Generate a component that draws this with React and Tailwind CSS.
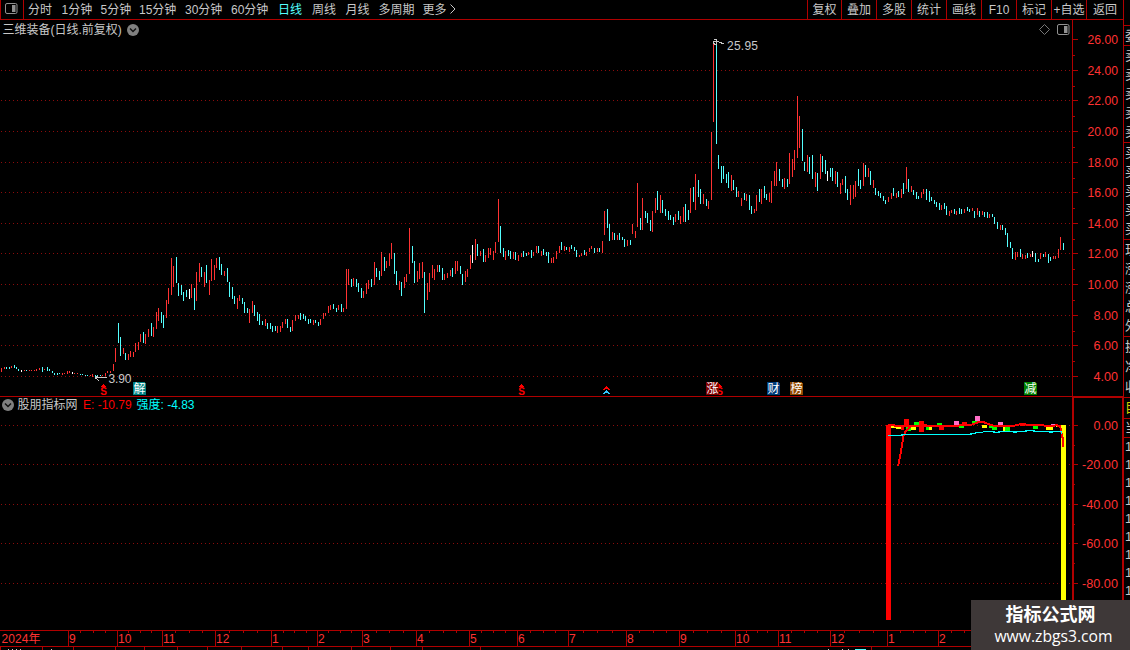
import React from "react";

const FONT = '"Liberation Sans", "Noto Sans CJK SC", sans-serif';

// Each bar is "<colour><x> <top> <bottom>" in thirds of a pixel, relative to its block's origin.
const BLOCKS = [
  {
    ox: 0, oy: 310,
    bars:
      "r4 174 186;r13 171 177;c19 171 177;c28 171 177;r34 168 174;c43 165 174;c49 171 177;c55 177 183;w64 180 186;r73 180 183;c79 180 183;r88 180 183;r94 180 183;r103 180 183;r109 177 183;r118 174 180;c127 171 186;r133 177 180;c142 171 183;c148 177 183;c157 183 189;c163 189 195;c172 189 195;c178 189 192;r187 189 195;r193 189 192;r202 183 192;r208 183 189;w217 186 192;r223 189 192;r232 189 192;c241 192 195;c247 192 195;c256 195 198;c262 195 198;r271 195 198;r277 192 201;c286 195 201;c292 195 198;c301 195 198;r307 195 198;r316 189 198;r322 183 189;r331 183 189;r340 162 183;r346 114 156;c355 39 99;c361 81 138;r370 114 132;c376 129 150;r385 132 150;r391 123 141;r400 126 141;r406 99 126;r415 96 120;r421 72 96;c430 66 99;r436 72 102;r445 57 81",
  },
  {
    ox: 0, oy: 230,
    bars:
      "c454 279 318;r460 291 321;r469 246 297;r475 234 273;c484 246 279;c490 255 294;r499 210 264;r505 174 222;r514 84 195;r520 108 171;c529 81 159;c535 159 198;c544 165 195;c550 186 213;c559 180 201;w568 177 207;r574 162 204;c583 174 240;r589 126 213;r598 99 156;c604 111 141;r613 126 171;c619 105 159;r628 150 195;r634 87 153;r643 105 150;r649 84 114;c658 81 120;c664 102 135;r673 123 138;c682 114 156;c688 156 201;c697 171 207;c703 198 222;r712 204 237;r718 195 213;c727 204 222;c733 216 249;c742 234 249;r748 237 279;r757 213 249;c763 225 258;c772 246 273;c778 252 285;c787 273 285;r796 267 288;c802 279 297;c811 279 297;c817 288 306;c826 288 303;r832 288 309;r841 288 306;r847 276 294;r856 267 282;c862 267 294;c871 291 306;r877 270 303;r886 255 273;r895 255 267;c901 249 270;c910 252 267;c916 258 273;c925 267 282;c931 267 279;r940 270 285;c946 270 279;c955 276 288;r961 267 285;r970 249 267;r976 249 258;r985 228 249;r991 225 240;c1000 222 237;c1009 234 246;r1015 225 240",
  },
  {
    ox: 340, oy: 180,
    bars:
      "c4 372 396;r10 384 396;r19 267 387;r25 267 315;c34 297 321;r40 294 318;c49 297 321;c55 309 336;c64 324 354;r70 333 354;r79 309 342;r85 300 327;c94 297 321;r103 246 315;c109 264 291;c118 273 300;r124 216 288;c133 231 273;r139 243 264;r148 219 258;r154 189 237;c163 219 282;c169 273 315;r178 303 330;c184 306 348;r193 291 324;r199 282 306;r208 144 282;c217 198 249;c223 243 309;r232 273 306;r238 249 297;r247 246 294;c253 276 399;r262 309 360;r268 279 336;r277 255 294;r283 267 300;r292 255 276;c298 255 276;c307 264 300;r313 282 300;r322 279 294;r331 270 288;c337 264 291;r346 243 282;r352 243 273;c361 258 282;c367 282 315;r376 273 306;r382 267 291;r391 225 267;w397 195 249;r406 177 240;c412 192 228;r421 213 228;c430 207 246;r436 225 246;r445 204 234;r451 204 225;r460 213 240;r466 186 219;r475 57 186;c481 138 219;c490 204 231;r496 213 240;c505 210 228;c511 213 237;r520 216 237;c526 216 240;r535 225 243;r544 219 231;c550 213 231;c559 219 228;r565 216 225;c574 210 234;r580 216 228;r589 198 219;c595 198 219;r604 213 228;c610 207 225;c619 216 228;c625 216 249;r634 234 249;r640 231 249;r649 213 237;r658 198 219;c664 186 210;r673 198 213;c679 201 210;r688 201 216;c694 195 207;c703 201 213;c709 210 231;r718 225 231;r724 219 228;c733 210 225;r739 216 228;r748 204 216;r754 198 207;c763 204 219;r772 204 216;c778 204 216;r787 183 219;r793 93 165;c802 87 144;c808 132 183;r817 156 180;c823 159 180;r832 165 180;c838 159 180;c847 171 180;c853 177 201;r862 180 198;c871 180 195;r877 132 162;r886 153 174;r892 9 141",
  },
  {
    ox: 640, oy: 30,
    bars:
      "c1 564 600;r7 504 600;c16 543 564;c22 549 579;c31 570 603;r37 543 606;r46 504 549;c52 483 540;r61 495 549;c67 510 549;c76 537 558;c85 543 570;c91 555 570;c100 561 585;r106 552 576;c115 543 570;r121 558 582;r130 531 576;c136 522 576;c145 540 570;r151 474 549;c160 471 516;r166 432 540;c175 450 501;c181 477 522;r190 492 522;c199 507 528;r205 513 537;r214 306 510;r220 36 276;c229 27 342;c235 375 417;c244 408 459;c250 408 447;c259 432 459;c265 426 474;r274 435 483;c280 450 480;c289 471 501;r295 483 501;r304 504 528;c313 489 510;r319 492 513;c328 495 540;c334 528 552;r343 537 549;r349 495 543;c358 477 516;r364 477 522;c373 468 504;c379 492 510;r388 489 516;r394 453 519;r403 423 468;r409 396 468;c418 417 453;c427 447 471;r433 444 477;c442 447 471;r448 369 462;r457 387 441;r463 360 420;r472 198 384;r478 258 354;c487 297 393;c493 396 423;r502 375 426;c508 381 432;c517 375 447;r526 426 471;c532 429 483;r541 372 447;c547 378 426;c556 390 432;w562 423 453;c571 414 441;c577 414 453;r586 423 462;c592 426 471",
  },
  {
    ox: 840, oy: 140,
    bars:
      "r1 129 162;r7 117 135;c16 108 159;c22 147 180;r31 135 195;r40 135 177;r46 123 171;c55 87 138;c61 120 147;r70 69 138;c76 75 111;r85 84 111;c91 93 135;r100 120 144;c106 144 165;c115 153 168;c121 159 174;c130 168 183;c136 180 192;r145 171 186;r154 159 177;c160 144 168;r169 159 174;c175 153 171;r184 147 174;c190 129 162;r199 81 147;c205 117 156;r214 138 156;c220 150 165;c229 156 177;c235 168 177;r244 156 174;r250 147 162;c259 147 180;c268 153 186;c274 171 183;c283 180 192;c289 186 201;c298 189 210;r304 195 210;c313 189 207;c319 198 225;r328 213 228;r334 210 219;c343 207 222;r349 213 225;c358 204 222;c364 207 222;r373 207 219;c382 201 213;c388 207 216;r397 204 213;c403 213 234;r412 204 225;c418 213 231;r427 213 225;c433 216 231;c442 216 234;r448 222 234;c457 222 231;c463 231 252;c472 246 267;r481 255 270;c487 255 270;c496 264 285;c502 279 321;c511 306 324;c517 324 357;r526 336 360;r532 336 351;c541 327 351;r547 342 357;r556 345 357;c562 339 354;r571 342 351;w577 333 351;c586 339 366;c595 357 366;r601 339 357;c610 342 351;r616 336 351;c625 342 369;c631 351 363;r640 348 357;r646 348 357;r655 327 354;r661 291 330;c670 309 330",
  },
];

const COLORS = { r: "#ff3232", c: "#54ffff", w: "#ffffff" };

const BARS = BLOCKS.flatMap(({ ox, oy, bars }) =>
  bars.split(";").map((s) => {
    const [x, a, b] = s.slice(1).split(" ").map(Number);
    return {
      color: COLORS[s[0]],
      x: ox + Math.floor(x / 3),
      y: oy + Math.round(a / 3),
      h: Math.max(1, Math.round((b - a) / 3)),
    };
  })
);

const PRICE_TICKS = [
  ["26.00", 39], ["24.00", 70], ["22.00", 100], ["20.00", 131], ["18.00", 162], ["16.00", 192],
  ["14.00", 223], ["12.00", 253], ["10.00", 284], ["8.00", 315], ["6.00", 345], ["4.00", 376],
];
const LEVEL_TICKS = [["0.00", 425], ["-20.00", 464], ["-40.00", 504], ["-60.00", 543], ["-80.00", 583]];

const MONTHS = [
  [68, "9"], [117, "10"], [162, "11"], [215, "12"], [271, "1"], [317, "2"], [362, "3"], [416, "4"], [469, "5"],
  [517, "6"], [568, "7"], [626, "8"], [679, "9"], [735, "10"], [778, "11"], [830, "12"], [887, "1"], [938, "2"],
];

const PERIODS = [
  ["分时", 28], ["1分钟", 61.5], ["5分钟", 100.5], ["15分钟", 139], ["30分钟", 185], ["60分钟", 231],
  ["日线", 278], ["周线", 312], ["月线", 345.5], ["多周期", 378.5], ["更多", 422.5],
];
const TOOLS = ["复权", "叠加", "多股", "统计", "画线", "F10", "标记", "+自选"];

function PanelIcon({ className }) {
  return (
    <svg className={className} width="13" height="11" viewBox="0 0 13 11" fill="none">
      <rect x="0.5" y="0.5" width="11.5" height="10" rx="1.5" stroke="#909090" />
      <rect x="7" y="2" width="3.5" height="7" fill="#909090" />
    </svg>
  );
}

function Chevron() {
  return (
    <svg width="12" height="12" viewBox="0 0 12 12">
      <circle cx="6" cy="6" r="6" fill="#808080" />
      <path d="M3 4.5 L6 7.5 L9 4.5" stroke="#111" strokeWidth="1.5" fill="none" />
    </svg>
  );
}

function Grid({ y }) {
  return <line x1="1" x2="1071" y1={y + 0.5} y2={y + 0.5} stroke="#8c0c0c" strokeDasharray="1 3" />;
}

function Badge({ x, text, fill }) {
  return (
    <g>
      <path d={`M${x} 382h11l2 2v11h-13z`} fill={fill} />
      <text x={x + 0.5} y="393" fontSize="12" fill="#fff">{text}</text>
    </g>
  );
}

function Dollar({ x }) {
  return (
    <g fill="#ff0000">
      <path d={`M${x} 387l3-3l3 3z`} />
      <text x={x - 0.3} y="395" fontSize="10" fontWeight="700">S</text>
      <rect x={x + 2} y="386" width="2" height="2" />
    </g>
  );
}

function AxisLabel({ text, y }) {
  const w = text.length * 6 + (text[0] === "-" ? 0 : 0.5);
  return (
    <text x={1118 - w} y={y + 5} fontSize="13" fill="#ff3232" textLength={w} lengthAdjust="spacingAndGlyphs">
      {text}
    </text>
  );
}

function PriceChart() {
  return (
    <svg className="block" width="1123" height="377" viewBox="0 20 1123 377" shapeRendering="crispEdges" fontFamily={FONT}>
      {PRICE_TICKS.slice(1).map(([t, y]) => <Grid key={t} y={y} />)}
      <rect x="1072" y="20" width="1" height="376" fill="#b00000" />
      {PRICE_TICKS.map(([t, y]) => (
        <g key={t}>
          <rect x="1073" y={y} width="5" height="1" fill="#b00000" />
          {y < 370 && <rect x="1073" y={y + 16} width="2" height="1" fill="#b00000" />}
          <AxisLabel text={t} y={y} />
        </g>
      ))}
      {BARS.map((b, i) => <rect key={i} x={b.x} y={b.y} width="1" height={b.h} fill={b.color} />)}

      <g stroke="#c8c8c8" fill="none">
        <path d="M95 377.5h12M95 377.5l4 3.5M95 377.5l3-1.5" />
        <path d="M713.500 39.500h3v5h-2l-1-2M713 41.500h5l6 2.500" />
      </g>
      <text x="108.500" y="383" fontSize="12" fill="#c8c8c8" textLength="23">3.90</text>
      <text x="727" y="50" fontSize="12" fill="#c8c8c8" textLength="31">25.95</text>
      <path d="M1044.500 24.500l5 5l-5 5l-5-5z" fill="none" stroke="#777" shapeRendering="auto" />

      <Dollar x={100.500} />
      <Badge x={133} text="解" fill="#008080" />
      <Dollar x={518.500} />
      <path d="M602.500 390l4-4l4 4h-2l-2-1.500l-2 1.500z" fill="#ff0000" />
      <path d="M602.500 394l4-4l4 4h-2l-2-1.500l-2 1.500z" fill="#30c8ff" />
      <Dollar x={716.500} />
      <Badge x={706} text="涨" fill="#800000" />
      <Badge x={767} text="财" fill="#003c78" />
      <Badge x={790} text="榜" fill="#904800" />
      <Badge x={1024} text="减" fill="#008000" />
      <rect x="0" y="396" width="1123" height="1" fill="#b00000" />
    </svg>
  );
}

// Blocks around the zero level: colour, x, y, width, height in thirds of a pixel.
const CELLS = [
  ["#ffff00", 93, 165, 18, 9], ["#ffff00", 108, 165, 15, 12], ["#ff0000", 123, 168, 9, 12],
  ["#ff0000", 132, 147, 15, 18], ["#00ff00", 138, 165, 15, 18], ["#ffff00", 153, 165, 15, 15],
  ["#00ff00", 162, 156, 15, 9], ["#ff0000", 177, 153, 15, 33], ["#ff0000", 192, 162, 9, 9],
  ["#00ff00", 198, 168, 12, 12], ["#ffff00", 207, 171, 8, 9], ["#00ff00", 213, 165, 9, 6],
  ["#00ff00", 231, 159, 15, 6], ["#ff0000", 237, 165, 15, 14], ["#ff6ec7", 282, 153, 15, 12],
  ["#ff0000", 306, 156, 15, 12], ["#00ff00", 297, 168, 15, 6], ["#ff6ec7", 345, 138, 15, 18],
  ["#00ff00", 336, 153, 15, 9], ["#ffff00", 366, 165, 15, 9], ["#00ff00", 387, 165, 12, 9],
  ["#00ff00", 396, 168, 15, 12], ["#ff6ec7", 414, 156, 15, 9], ["#ffff00", 428, 168, 8, 15],
  ["#00ff00", 435, 171, 15, 12], ["#ff0000", 480, 159, 15, 9], ["#00ff00", 519, 165, 15, 12],
  ["#ffff00", 558, 168, 21, 12], ["#ff6ec7", 573, 162, 15, 6], ["#ffff00", 588, 165, 18, 6],
];

function IndicatorChart() {
  return (
    <svg className="block" width="1123" height="233" viewBox="0 397 1123 233" shapeRendering="crispEdges" fontFamily={FONT}>
      {LEVEL_TICKS.map(([t, y]) => (
        <g key={t}>
          <Grid y={y} />
          <rect x="1074" y={y} width="4" height="1" fill="#b00000" />
          <rect x="1074" y={y + 20} width="1" height="1" fill="#b00000" />
          <AxisLabel text={t} y={y} />
        </g>
      ))}
      <path d="M1072 396h51v2h-49v232h-2z" fill="#b00000" />
      <rect x="1122" y="397" width="1" height="233" fill="#b00000" />
      <rect x="886" y="425" width="5" height="195" fill="#ff0000" />
      <rect x="1061" y="425" width="5" height="195" fill="#ffff00" />
      <g transform="translate(860 370) scale(0.33333)">
        {CELLS.map(([c, x, y, w, h], i) => <rect key={i} x={x} y={y} width={w} height={h} fill={c} />)}
        <path
          fill="none" stroke="#ff0000" strokeWidth="6"
          d="M84 167L90 165H100L106 168L160 168H270L290 167L320 165L340 163L354 157H372L384 162L400 167H440L460 168L480 163L517 164L545 166L570 168L590 166L600 168L604 185L608 205V231"
        />
        <path fill="none" stroke="#ff0000" strokeWidth="6" d="M111 286H115L118 270L124 238L130 200L136 186L146 174L156 167" />
        <path
          fill="none" stroke="#00ffff" strokeWidth="3.2"
          d="M84 196.500H126V193.500H333V190.500H347V187.500H360L378 184.500H402V187.500H417V184.500H462V187.500H468V184.500H498V181.500H522V184.500H570V187.500H576V184.500H603L606 190.500"
        />
      </g>
    </svg>
  );
}

function TimeAxis() {
  const line = "#b00000";
  return (
    <svg className="block" width="1123" height="20" viewBox="0 630 1123 20" shapeRendering="crispEdges" fontFamily={FONT}>
      <rect x="0" y="630" width="1123" height="1" fill={line} />
      <rect x="0" y="646" width="1123" height="1" fill={line} />
      <text x="1.500" y="643" fontSize="12" fill="#ff3232" textLength="39">2024年</text>
      {MONTHS.map(([x, label], i) => {
        const step = ((MONTHS[i + 1] ? MONTHS[i + 1][0] : 990) - x) / 4;
        return (
          <g key={x}>
            <rect x={x} y="630" width="1" height="17" fill={line} />
            {[1, 2, 3].map((n) => <rect key={n} x={Math.round(x + n * step)} y="631" width="1" height="2" fill={line} />)}
            <text x={x + 1} y="643" fontSize="12" fill="#ff3232">{label}</text>
          </g>
        );
      })}
      {[0, 42, 73, 115, 144, 177, 207, 241, 282, 308, 351, 390, 422, 480, 871].map((x) => (
        <rect key={x} x={x} y="647" width="1" height="3" fill={line} />
      ))}
      {[8, 12, 16, 20, 51, 828, 842, 848].map((x) => <rect key={x} x={x} y="649" width="1" height="1" fill="#c8c8c8" />)}
      <rect x="855" y="649" width="11" height="1" fill="#54ffff" />
    </svg>
  );
}

function StripGroup({ rows, className }) {
  return (
    <div className={`flex shrink-0 flex-col justify-around overflow-hidden border-t border-[#b00000] pl-px ${className}`}>
      {rows.map((r, i) => <span key={i} className="block w-4 whitespace-nowrap text-[13px] leading-[14px]">{r}</span>)}
    </div>
  );
}

function SideStrip() {
  return (
    <aside className="flex w-[7px] shrink-0 flex-col overflow-hidden border-l border-[#b00000] text-[#c8c8c8]">
      <div className="h-[5px] shrink-0" />
      <StripGroup rows={["委"]} className="h-5" />
      <StripGroup rows={["卖", "卖", "卖", "卖", "卖"]} className="h-[97px]" />
      <StripGroup rows={["买", "买", "买", "买", "买"]} className="h-[97px]" />
      <StripGroup rows={["现", "涨", "涨", "总", "外"]} className="h-[97px]" />
      <StripGroup rows={["换", "净", "收"]} className="h-[61px]" />
      <StripGroup rows={["目"]} className="h-[21px] text-[#d0d000]" />
      <StripGroup rows={["当"]} className="h-[19px]" />
      <StripGroup rows={["1", "1", "1", "1", "1", "1", "1", "1", "1"]} className="h-[163px]" />
    </aside>
  );
}

export default function App() {
  return (
    <div
      className="relative flex h-[650px] w-[1130px] flex-col overflow-hidden bg-black text-xs text-[#c8c8c8]"
      style={{ fontFamily: FONT }}
    >
      <header className="flex h-5 shrink-0 leading-[20px]">
        <div className="flex w-[1123px] border-b border-[#b00000]">
          <div className="flex w-6 items-center border-x border-[#b00000] pl-1">
            <PanelIcon className="-mt-[2px]" />
          </div>
          <nav className="flex flex-1 pl-1">
            {PERIODS.map(([label, x], i) => (
              <span
                key={label}
                className={`shrink-0 whitespace-nowrap ${label === "日线" ? "text-[#54ffff]" : ""}`}
                style={{ width: (PERIODS[i + 1] ? PERIODS[i + 1][1] : 449) - x }}
              >
                {label}
              </span>
            ))}
            <svg className="mt-1" width="8" height="10" viewBox="0 0 8 10">
              <path d="M1.500 0.500L6 5L1.500 9.500" fill="none" stroke="#c8c8c8" />
            </svg>
          </nav>
          <div className="flex">
            {TOOLS.map((t, i) => (
              <div
                key={t}
                className={`whitespace-nowrap border-l border-[#b00000] text-center ${i === 0 ? "w-[34px]" : "w-[35px]"}`}
              >
                {t}
              </div>
            ))}
            <div className="w-[37px] border-l border-[#b00000] text-center">返回</div>
          </div>
        </div>
        <div className="w-[7px] border-l border-[#b00000]" />
      </header>

      <div className="flex min-h-0 flex-1">
        <main className="flex w-[1123px] shrink-0 flex-col">
          <section className="relative">
            <PriceChart />
            <div className="absolute left-[2.5px] top-[3px] flex h-3.5 items-center gap-[5px]">
              <span>三维装备(日线.前复权)</span>
              <Chevron />
            </div>
            <PanelIcon className="absolute left-[1057px] top-[4px]" />
          </section>
          <section className="relative">
            <IndicatorChart />
            <div className="absolute left-[2px] top-[1px] flex h-3.5 items-center">
              <Chevron />
              <span className="ml-[3.500px] w-[65.500px]">股朋指标网</span>
              <span className="w-[53.500px] whitespace-nowrap text-[#ff0000]">E: -10.79</span>
              <span className="whitespace-nowrap text-[#00ffff]">强度: -4.83</span>
            </div>
          </section>
          <TimeAxis />
        </main>
        <SideStrip />
      </div>

      <div className="absolute bottom-0 right-0 flex h-[50px] w-[159px] flex-col items-center bg-[#3e3838] text-white">
        <div className="mt-[3px] text-[18px] font-bold leading-6">指标公式网</div>
        <div className="pl-1.5 text-[15.7px] leading-[18px]" style={{ fontFamily: '"Open Sans", "Noto Sans", sans-serif' }}>
          www.zbgs3.com
        </div>
      </div>
    </div>
  );
}
